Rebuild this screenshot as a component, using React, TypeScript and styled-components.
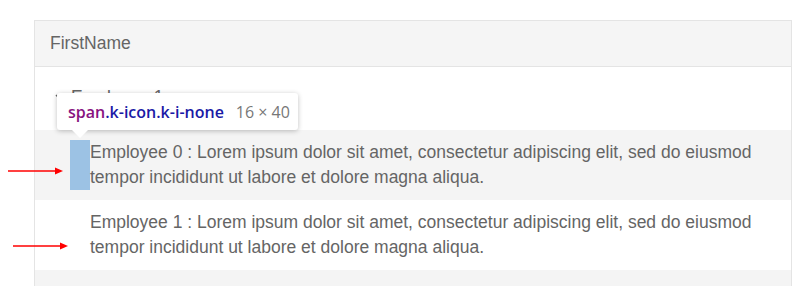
import React from "react";
import styled, { createGlobalStyle } from "styled-components";

const GlobalStyle = createGlobalStyle`
  html, body {
    margin: 0;
    padding: 0;
    background: #ffffff;
  }
  body {
    font-family: "Liberation Sans", Arial, sans-serif;
  }
`;

const Page = styled.div`
  position: relative;
  width: 793px;
  height: 286px;
  overflow: hidden;
  padding: 20px 0 0 34px;
  box-sizing: border-box;
`;

const Grid = styled.div`
  width: 758px;
  border: 1px solid #e4e4e4;
  border-bottom: none;
  box-sizing: border-box;
  color: #656565;
  font-size: 17.5px;
`;

const HeaderRow = styled.div`
  height: 45px;
  display: flex;
  align-items: center;
  padding-left: 15px;
  background: #f5f5f5;
  border-bottom: 1px solid #e4e4e4;
`;

const GroupRow = styled.div`
  height: 63px;
  display: flex;
  align-items: center;
  gap: 6px;
  padding: 0 0 3px 20px;
  box-sizing: border-box;
`;

const Chevron = styled.span`
  display: inline-flex;
  width: 10px;
  color: #656565;
`;

const DataRow = styled.div<{ $alt?: boolean }>`
  height: 70px;
  display: flex;
  align-items: center;
  padding-left: 35px;
  background: ${({ $alt }) => ($alt ? "#f4f4f4" : "#ffffff")};
`;

const IconSpan = styled.span<{ $highlight?: boolean }>`
  flex: none;
  width: 20px;
  height: 50px;
  background: ${({ $highlight }) =>
    $highlight ? "rgba(111, 168, 220, 0.66)" : "transparent"};
`;

const CellText = styled.div`
  width: 670px;
  line-height: 25px;
  font-size: 17.5px;
`;

const Tooltip = styled.div`
  position: absolute;
  left: 57px;
  top: 93px;
  height: 37px;
  padding: 0 8px 0 11px;
  display: flex;
  align-items: center;
  gap: 12px;
  background: #ffffff;
  border-radius: 3px;
  box-shadow: 0 1px 5px rgba(0, 0, 0, 0.25);
  font-family: "Open Sans", "Noto Sans", sans-serif;
  font-size: 16px;

  &::after {
    content: "";
    position: absolute;
    left: 15px;
    bottom: -8px;
    border-left: 8px solid transparent;
    border-right: 8px solid transparent;
    border-top: 8px solid #ffffff;
  }
`;

const Selector = styled.span`
  font-weight: 600;
  color: #1a1aa6;
`;

const Tag = styled.span`
  color: #881280;
`;

const Size = styled.span`
  color: #777777;
`;

const Annotation = styled.svg`
  position: absolute;
  left: 0;
  top: 0;
  pointer-events: none;
`;

const lorem =
  "Lorem ipsum dolor sit amet, consectetur adipiscing elit, sed do eiusmod tempor incididunt ut labore et dolore magna aliqua.";

export default function App() {
  return (
    <>
      <GlobalStyle />
      <Page>
        <Grid>
          <HeaderRow>FirstName</HeaderRow>
          <GroupRow>
            <Chevron>
              <svg width="10" height="8" viewBox="0 0 10 8">
                <path d="M1 2l4 4 4-4" fill="none" stroke="#656565" strokeWidth="1.5" />
              </svg>
            </Chevron>
            Employee 1
          </GroupRow>
          <DataRow $alt>
            <IconSpan $highlight />
            <CellText>Employee 0 : {lorem}</CellText>
          </DataRow>
          <DataRow>
            <IconSpan />
            <CellText>Employee 1 : {lorem}</CellText>
          </DataRow>
          <DataRow $alt />
        </Grid>
        <Tooltip>
          <Selector>
            <Tag>span</Tag>.k-icon.k-i-none
          </Selector>
          <Size>16 × 40</Size>
        </Tooltip>
        <Annotation width="793" height="286">
          <line x1="8" y1="171" x2="56" y2="171" stroke="#ff0000" strokeWidth="1.5" />
          <path d="M55 167.5L63 171L55 174.5Z" fill="#ff0000" />
          <line x1="13" y1="246" x2="61" y2="246" stroke="#ff0000" strokeWidth="1.5" />
          <path d="M60 242.5L68 246L60 249.5Z" fill="#ff0000" />
        </Annotation>
      </Page>
    </>
  );
}
